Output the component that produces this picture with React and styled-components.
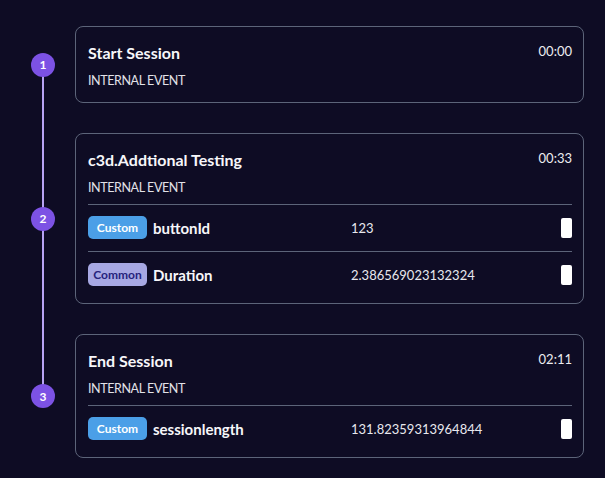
import React from 'react'
import styled, { createGlobalStyle } from 'styled-components'

const GlobalStyle = createGlobalStyle`
  html, body {
    margin: 0;
    background: #0e0c24;
  }
  body {
    font-family: Lato, "Open Sans", sans-serif;
    color: #f2f2f5;
  }
`

const events = [
  { title: 'Start Session', time: '00:00', type: 'INTERNAL EVENT', props: [] },
  {
    title: 'c3d.Addtional Testing',
    time: '00:33',
    type: 'INTERNAL EVENT',
    props: [
      { kind: 'custom', name: 'buttonId', value: '123' },
      { kind: 'common', name: 'Duration', value: '2.386569023132324' }
    ]
  },
  {
    title: 'End Session',
    time: '02:11',
    type: 'INTERNAL EVENT',
    props: [{ kind: 'custom', name: 'sessionlength', value: '131.82359313964844' }]
  }
]

const Timeline = styled.div`
  display: flex;
  flex-direction: column;
  gap: 30px;
  padding: 26px 21px 20px 19px;
`

const Item = styled.div`
  display: grid;
  grid-template-columns: 48px 1fr;
  column-gap: 8px;
`

const Rail = styled.div`
  position: relative;
  display: flex;
  align-items: center;
  justify-content: center;

  &::before,
  &::after {
    content: '';
    position: absolute;
    left: 23px;
    width: 2px;
    background: #b7a3f3;
  }
  &::before {
    top: 0;
    bottom: 50%;
    display: ${p => (p.$first ? 'none' : 'block')};
  }
  &::after {
    top: 50%;
    bottom: -30px;
    display: ${p => (p.$last ? 'none' : 'block')};
  }
`

const Dot = styled.div`
  position: relative;
  z-index: 1;
  width: 24px;
  height: 24px;
  border-radius: 50%;
  background: #7c52e4;
  color: #fff;
  font-size: 12px;
  font-weight: 700;
  display: flex;
  align-items: center;
  justify-content: center;
`

const Card = styled.div`
  border: 1px solid #5c6479;
  border-radius: 8px;
  padding: 15px 11px 12px 12px;
`

const Head = styled.div`
  display: flex;
  justify-content: space-between;
  align-items: flex-start;
`

const Title = styled.div`
  font-size: 16px;
  font-weight: 700;
  line-height: 22px;
  color: #f7f7fa;
`

const Time = styled.div`
  font-size: 13px;
  line-height: 18px;
  color: #ececf0;
`

const Kind = styled.div`
  margin-top: 8px;
  font-size: 12.5px;
  line-height: 18px;
  letter-spacing: -0.4px;
  color: #e2e2e8;
`

const Props = styled.div`
  margin-top: 7px;
`

const Row = styled.div`
  display: grid;
  grid-template-columns: 263px 1fr auto;
  align-items: center;
  border-top: 1px solid #5c6479;
  padding: 11px 0 12px;
  &:last-child {
    padding-bottom: 5px;
  }
`

const Key = styled.div`
  display: flex;
  align-items: center;
  gap: 6px;
  font-size: 15px;
  font-weight: 700;
  color: #f7f7fa;
`

const Badge = styled.span`
  width: 59px;
  height: 23px;
  border-radius: 5px;
  display: inline-flex;
  align-items: center;
  justify-content: center;
  font-size: 12px;
  font-weight: 700;
  background: ${p => (p.$kind === 'common' ? '#a7a8e3' : '#4b9fe7')};
  color: ${p => (p.$kind === 'common' ? '#25237c' : '#ffffff')};
`

const Value = styled.div`
  font-size: 13px;
  color: #e8e8ee;
`

const Toggle = styled.div`
  width: 11px;
  height: 20px;
  border-radius: 2px;
  background: #ffffff;
`

export default function App() {
  return (
    <>
      <GlobalStyle />
      <Timeline>
        {events.map((ev, i) => (
          <Item key={ev.title}>
            <Rail $first={i === 0} $last={i === events.length - 1}>
              <Dot>{i + 1}</Dot>
            </Rail>
            <Card>
              <Head>
                <Title>{ev.title}</Title>
                <Time>{ev.time}</Time>
              </Head>
              <Kind>{ev.type}</Kind>
              {ev.props.length > 0 && (
                <Props>
                  {ev.props.map(p => (
                    <Row key={p.name}>
                      <Key>
                        <Badge $kind={p.kind}>{p.kind === 'common' ? 'Common' : 'Custom'}</Badge>
                        {p.name}
                      </Key>
                      <Value>{p.value}</Value>
                      <Toggle />
                    </Row>
                  ))}
                </Props>
              )}
            </Card>
          </Item>
        ))}
      </Timeline>
    </>
  )
}
